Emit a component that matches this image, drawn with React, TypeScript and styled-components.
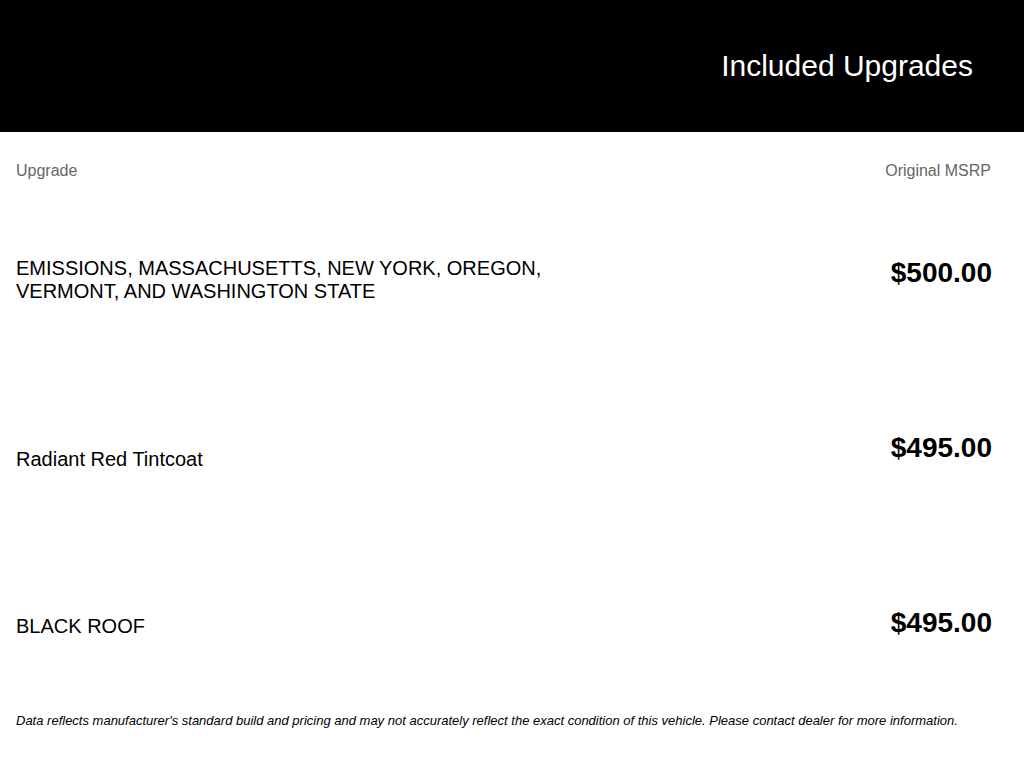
import React from "react";
import styled, { createGlobalStyle } from "styled-components";

const Global = createGlobalStyle`
  html, body { margin: 0; padding: 0; background: #fff; }
  body { font-family: "Liberation Sans", Arial, sans-serif; color: #000; }
`;

const Page = styled.div`
  width: 1024px;
  min-height: 768px;
  background: #fff;
`;

const Banner = styled.header`
  height: 132px;
  background: #000;
  display: flex;
  align-items: center;
  justify-content: flex-end;
  padding-right: 51px;
  box-sizing: border-box;
`;

const Title = styled.h1`
  margin: 0;
  font-size: 30px;
  font-weight: 400;
  line-height: 34px;
  color: #fff;
`;

const Body = styled.section`
  padding: 30px 32px 0 16px;
`;

const HeadRow = styled.div`
  display: flex;
  justify-content: space-between;
  align-items: center;
  height: 18px;
  margin-bottom: 77px;
`;

const HeadLabel = styled.span<{ $end?: boolean }>`
  font-size: 16px;
  line-height: 18px;
  color: #666;
  margin-right: ${(p) => (p.$end ? "1px" : "0")};
`;

const Row = styled.div<{ $h: number }>`
  display: flex;
  justify-content: space-between;
  align-items: flex-start;
  height: ${(p) => p.$h}px;
`;

const Desc = styled.div<{ $offset: number }>`
  max-width: 580px;
  font-size: 20px;
  line-height: 23px;
  margin-top: ${(p) => p.$offset}px;
`;

const Price = styled.div`
  font-size: 28px;
  font-weight: 700;
  line-height: 32px;
`;

const Note = styled.p`
  margin: 0;
  font-size: 13px;
  line-height: 15px;
  font-style: italic;
`;

const rows = [
  { desc: "EMISSIONS, MASSACHUSETTS, NEW YORK, OREGON, VERMONT, AND WASHINGTON STATE", price: "$500.00", offset: 0, h: 175 },
  { desc: "Radiant Red Tintcoat", price: "$495.00", offset: 16, h: 175 },
  { desc: "BLACK ROOF", price: "$495.00", offset: 8, h: 106 },
];

export default function App() {
  return (
    <Page>
      <Global />
      <Banner>
        <Title>Included Upgrades</Title>
      </Banner>
      <Body>
        <HeadRow>
          <HeadLabel>Upgrade</HeadLabel>
          <HeadLabel $end>Original MSRP</HeadLabel>
        </HeadRow>
        {rows.map((r, i) => (
          <Row key={i} $h={r.h}>
            <Desc $offset={r.offset}>{r.desc}</Desc>
            <Price>{r.price}</Price>
          </Row>
        ))}
        <Note>
          Data reflects manufacturer's standard build and pricing and may not accurately reflect the exact condition of this vehicle. Please contact dealer for more information.
        </Note>
      </Body>
    </Page>
  );
}
